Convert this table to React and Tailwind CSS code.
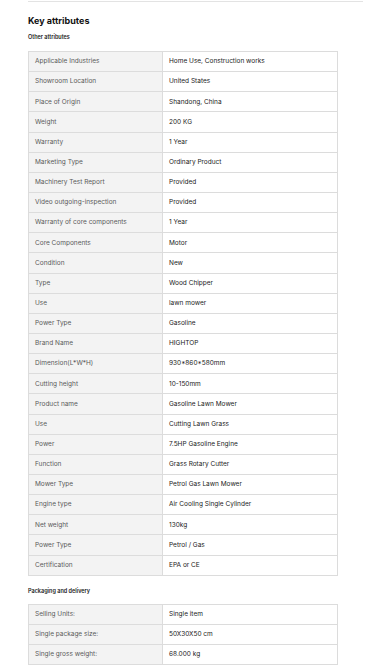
import React from 'react';

const attributes = [
    ['Applicable Industries', 'Home Use, Construction works'],
    ['Showroom Location', 'United States'],
    ['Place of Origin', 'Shandong, China'],
    ['Weight', '200 KG'],
    ['Warranty', '1 Year'],
    ['Marketing Type', 'Ordinary Product'],
    ['Machinery Test Report', 'Provided'],
    ['Video outgoing-inspection', 'Provided'],
    ['Warranty of core components', '1 Year'],
    ['Core Components', 'Motor'],
    ['Condition', 'New'],
    ['Type', 'Wood Chipper'],
    ['Use', 'lawn mower'],
    ['Power Type', 'Gasoline'],
    ['Brand Name', 'HIGHTOP'],
    ['Dimension(L*W*H)', '930*860*580mm'],
    ['Cutting height', '10-150mm'],
    ['Product name', 'Gasoline Lawn Mower'],
    ['Use', 'Cutting Lawn Grass'],
    ['Power', '7.5HP Gasoline Engine'],
    ['Function', 'Grass Rotary Cutter'],
    ['Mower Type', 'Petrol Gas Lawn Mower'],
    ['Engine type', 'Air Cooling Single Cylinder'],
    ['Net weight', '130kg'],
    ['Power Type', 'Petrol / Gas'],
    ['Certification', 'EPA or CE'],
];

const packaging = [
    ['Selling Units:', 'Single item'],
    ['Single package size:', '50X30X50 cm'],
    ['Single gross weight:', '68.000 kg'],
];

const AttrTable = ({ rows }) => (
    <div className="w-[310px] border-t border-l border-[#dcdcdc]">
        {rows.map(([label, value], i) => (
            <div key={i} className="flex h-[20.15px] border-b border-[#dcdcdc]">
                <div className="w-[134px] shrink-0 bg-[#f3f3f3] border-r border-[#dcdcdc] pl-[6px] flex items-center text-[#5a5a5a]">
                    {label}
                </div>
                <div className="flex-1 border-r border-[#dcdcdc] pl-[6px] flex items-center text-[#222]">
                    {value}
                </div>
            </div>
        ))}
    </div>
);

const App = () => {
    return (
        <div
            className="w-[377px] h-[670px] bg-white overflow-hidden pl-[28px] text-[6.5px] leading-none"
            style={{ fontFamily: 'Inter, "Liberation Sans", sans-serif' }}
        >
            <div className="mt-[1px] h-px w-[335px] bg-[#e3e3e3]" />
            <h2 className="mt-[13px] text-[9px] leading-[12px] font-bold text-[#111]">Key attributes</h2>
            <h3 className="mt-[6px] text-[5.5px] leading-[8px] font-semibold text-[#222]">Other attributes</h3>
            <div className="mt-[10px]">
                <AttrTable rows={attributes} />
            </div>
            <h3 className="mt-[11px] text-[5.5px] leading-[8px] font-semibold text-[#222]">Packaging and delivery</h3>
            <div className="mt-[9px]">
                <AttrTable rows={packaging} />
            </div>
        </div>
    );
};

export default App;
